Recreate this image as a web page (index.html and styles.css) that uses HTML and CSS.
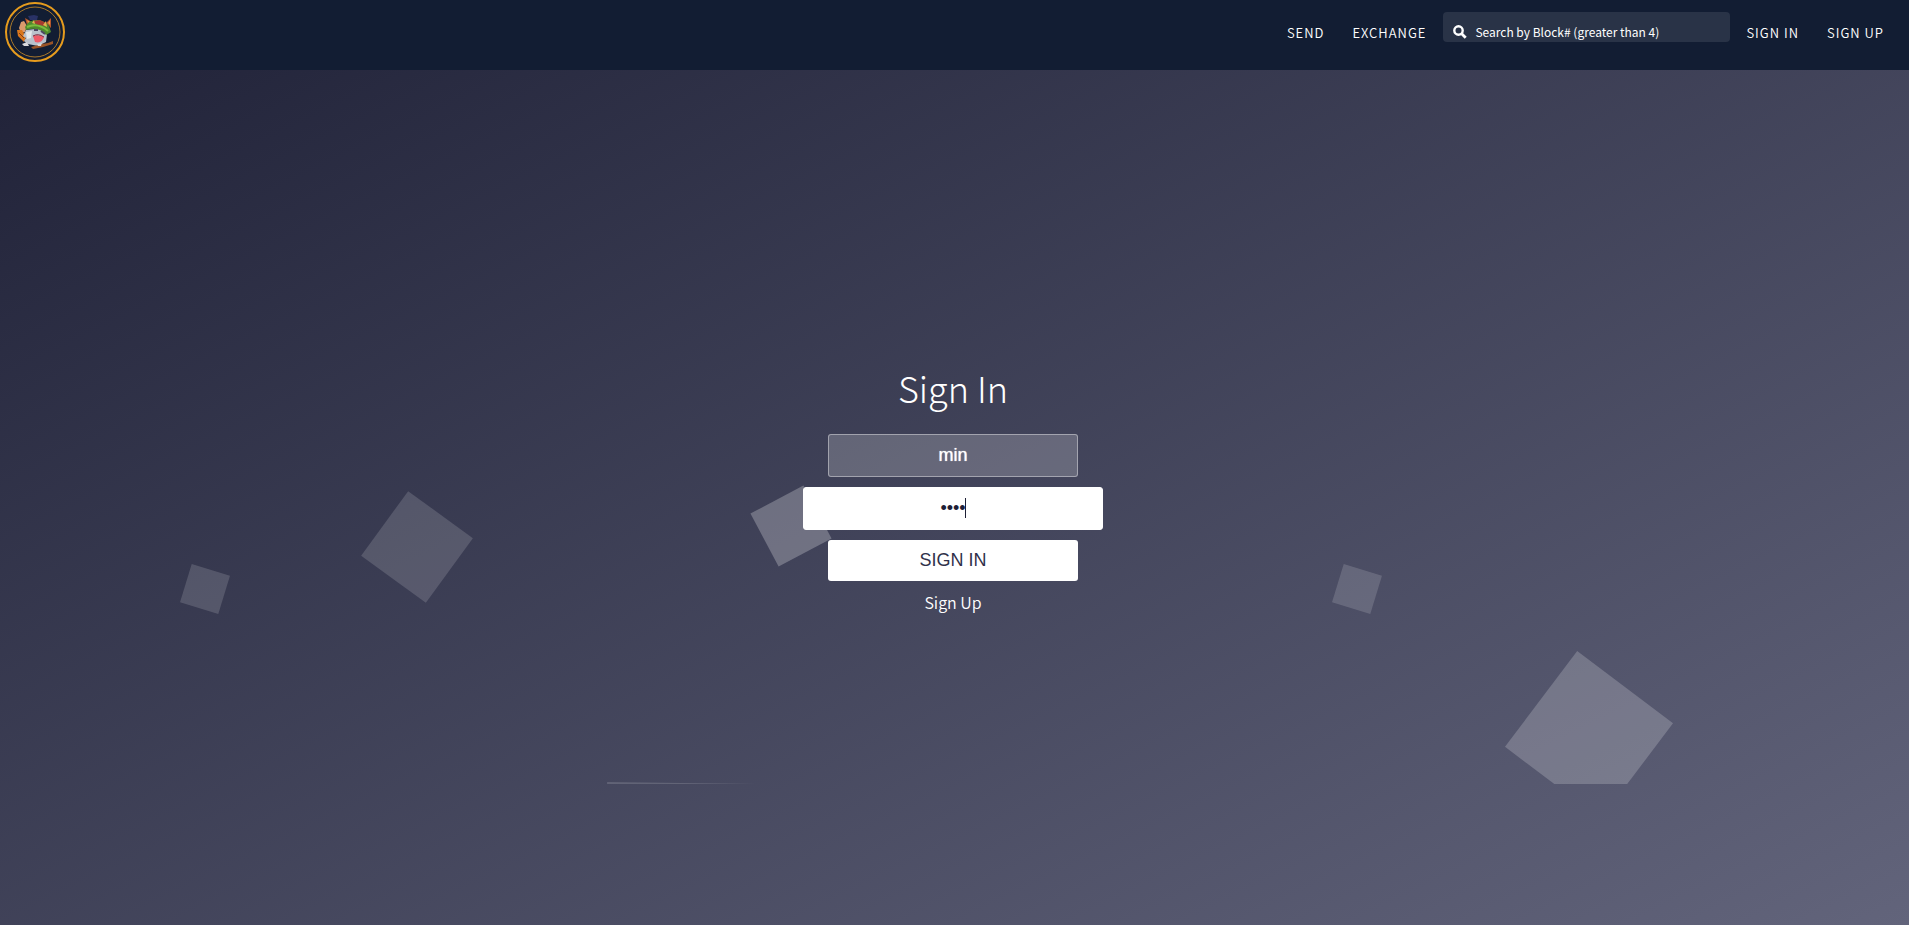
FILE: index.html
```html
<!DOCTYPE html>
<html lang="en">
<head>
<meta charset="utf-8">
<title>Sign In</title>
<link rel="stylesheet" href="styles.css">
</head>
<body>
<header class="topbar">
  <a class="logo" href="#" aria-label="Home">
    <svg viewBox="0 0 62 62" width="62" height="62" aria-hidden="true">
      <circle cx="31" cy="31" r="29" fill="none" stroke="#e69c1e" stroke-width="2"/>
      <circle cx="31" cy="31" r="25" fill="none" stroke="#a9782a" stroke-width="1"/>
      <path d="M17 21 L20 20 L23 25 L21 31 L17 32 L15 27Z" fill="#d99a6c"/>
      <path d="M13 29 L18 29 L22 36 L20 41 L14 35Z" fill="#d9761c"/>
      <path d="M15 32 L20 37" stroke="#7c3d1c" stroke-width="1"/>
      <path d="M24 15 L30 14 L34 15 L33 19 L26 19Z" fill="#293266"/>
      <path d="M23 24 L21 17 L28 21Z M42 22 L47 17 L47 27Z" fill="#b5562b"/>
      <path d="M24 22 L23 19 L26 21Z M44 22 L46 19 L46 24Z" fill="#e6a04a"/>
      <path d="M22 29 L40 27 L43 33 L42 41 L34 45 L24 43 L20 40 L22 37 L19 35Z" fill="#b9c1cb"/>
      <path d="M22 31 L28 30 L27 37 L23 38Z" fill="#e3e7ea"/>
      <path d="M21 26 Q25 18 34 19 Q45 20 47 31 L42 34 Q35 25 22 29Z" fill="#4f8a2c"/>
      <path d="M23 26 Q34 21 44 30" fill="none" stroke="#7cbd3e" stroke-width="2"/>
      <path d="M29 20 L36 19 L42 22 L40 25 L32 23Z" fill="#a63a30"/>
      <path d="M28 22 L30 19 L31 23Z M39 24 L42 20 L43 26Z" fill="#e2b04f"/>
      <path d="M30 29 L34 29 M37 30 L41 33" stroke="#4d4660" stroke-width="2"/>
      <path d="M29 35 Q34 33 40 36 Q38 43 31 41Z" fill="#ee5a68"/>
      <path d="M29 35 Q34 32 40 36" fill="none" stroke="#7c2b3f" stroke-width="1"/>
      <path d="M27 46 L38 43 L44 42 L49 40 L49 43 L39 46 L29 48Z" fill="#9a5427"/>
      <path d="M18 43 L23 41 L25 45 L20 45Z M33 43 L38 42 L37 45 L34 45Z" fill="#d8d9dd"/>
    </svg>
  </a>
  <nav class="nav">
    <a href="#">SEND</a>
    <a href="#">EXCHANGE</a>
    <label class="search">
      <svg viewBox="0 0 14 14" width="14" height="14" aria-hidden="true">
        <circle cx="5.5" cy="5.5" r="4.2" fill="none" stroke="#fff" stroke-width="2.4"/>
        <path d="M8.7 8.7 L12.7 12.7" stroke="#fff" stroke-width="2.8"/>
      </svg>
      <input type="text" placeholder="Search by Block# (greater than 4)" aria-label="Search by Block#">
    </label>
    <a href="#">SIGN IN</a>
    <a href="#">SIGN UP</a>
  </nav>
</header>
<div class="bubbles" aria-hidden="true">
  <i class="b b1"></i><i class="b b2"></i><i class="b b3"></i><i class="b b4"></i><i class="b b5"></i><i class="b b6"></i>
</div>
<main class="page">
  <form class="form">
    <h1>Sign In</h1>
    <input class="field" type="text" value="min" aria-label="Username">
    <div class="caret"><input class="field active" type="password" value="pass" aria-label="Password"></div>
    <button class="submit" type="button">SIGN IN</button>
    <a class="signup" href="#">Sign Up</a>
  </form>
</main>
</body>
</html>
```

FILE: styles.css
```css
* { box-sizing: border-box; }
body {
  margin: 0;
  min-height: 100vh;
  display: flex;
  flex-direction: column;
  position: relative;
  color: #fff;
  font-family: "Noto Sans CJK SC", "Noto Sans", sans-serif;
  font-weight: 300;
  background: linear-gradient(to bottom right, #1e2036, #62647b);
}
a { color: inherit; text-decoration: none; }
.topbar {
  position: relative;
  z-index: 2;
  display: flex;
  justify-content: space-between;
  height: 70px;
  padding: 0 25px 0 4px;
  background: #121d33;
}
.logo { display: block; padding-top: 1px; }
.nav {
  display: flex;
  align-items: flex-start;
  font-size: 13px;
  font-weight: 350;
  line-height: 20px;
  letter-spacing: 1px;
}
.nav > a { padding-top: 23px; margin-left: 28px; }
.search {
  display: flex;
  align-items: flex-end;
  gap: 8px;
  width: 287px;
  height: 30px;
  margin: 12px -12px 0 17px;
  padding: 0 10px 2px;
  border-radius: 4px;
  background: #293347;
}
.search svg { flex: none; margin-bottom: 1px; }
.search input {
  flex: 1;
  min-width: 0;
  height: 16px;
  padding: 0;
  border: 0;
  outline: 0;
  background: none;
  color: #fff;
  font: 400 12px/16px "Noto Sans CJK SC", sans-serif;
}
.search input::placeholder { color: #fff; opacity: 1; }
.bubbles {
  position: absolute;
  inset: 0 0 141px;
  overflow: hidden;
}
.b { position: absolute; background: rgba(255, 255, 255, 0.15); }
.b1 { left: 9.7%; top: 569px; width: 40px; height: 40px; transform: rotate(17deg); }
.b2 { left: 19.75%; top: 507px; width: 80px; height: 80px; transform: rotate(36deg); }
.b3 { left: 39.85%; top: 496px; width: 60px; height: 60px; transform: rotate(-28deg); background: rgba(255, 255, 255, 0.25); }
.b4 { left: 70.05%; top: 569px; width: 40px; height: 40px; transform: rotate(17deg); }
.b5 { left: 80.1%; top: 675px; width: 120px; height: 120px; transform: rotate(37deg); background: rgba(255, 255, 255, 0.2); }
.b6 { left: 31.75%; top: 783px; width: 160px; height: 160px; transform: rotate(0.8deg); }
.page {
  position: relative;
  flex: 1;
  display: flex;
  justify-content: center;
  padding: 290px 3px 0 0;
}
.form {
  display: flex;
  flex-direction: column;
  align-items: center;
  gap: 10px;
}
h1 {
  margin: 0 0 10px;
  font-size: 36px;
  line-height: 54px;
  font-weight: 200;
}
.field {
  display: block;
  width: 250px;
  height: 43px;
  padding: 0 15px;
  border: 1px solid rgba(255, 255, 255, 0.4);
  border-radius: 3px;
  outline: 0;
  background: rgba(255, 255, 255, 0.2);
  color: #fff;
  text-align: center;
  text-shadow: 0 0 1px #fff;
  font: 400 18px/24px "Liberation Sans", Arial, sans-serif;
}
.active {
  width: 300px;
  border-color: #fff;
  background: #fff;
  color: #1e2036;
  text-shadow: none;
}
.caret { position: relative; }
.caret::after {
  content: "";
  position: absolute;
  left: 162px;
  top: 11px;
  width: 1px;
  height: 20px;
  background: #1e2036;
}
.submit {
  width: 250px;
  height: 41px;
  padding: 0 0 2px;
  border: 0;
  border-radius: 3px;
  background: #fff;
  color: #30314a;
  font: 400 18px/24px "Liberation Sans", Arial, sans-serif;
}
.signup { font-size: 16px; font-weight: 350; line-height: 22px; }
```
